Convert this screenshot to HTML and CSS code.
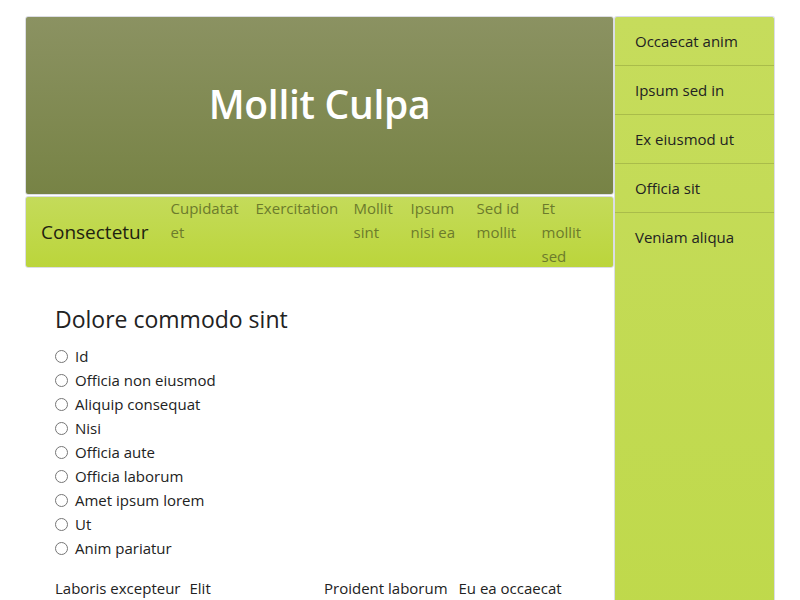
FILE: index.html
```html
<!DOCTYPE html>
<html>
<head>
<meta charset="utf-8">
<link rel="stylesheet" href="styles.css">
</head>
<body>
<div class="page">
  <div class="main">
    <header class="hero"><h1>Mollit Culpa</h1></header>
    <nav class="nav">
      <span class="brand">Consectetur</span>
      <a class="link l1">Cupidatat<br>et</a>
      <a class="link l2">Exercitation</a>
      <a class="link l3">Mollit<br>sint</a>
      <a class="link l4">Ipsum<br>nisi ea</a>
      <a class="link l5">Sed id<br>mollit</a>
      <a class="link l6">Et<br>mollit<br>sed</a>
    </nav>
    <section class="content">
      <h2>Dolore commodo sint</h2>
      <ul class="radios">
        <li><label><input type="radio" name="r">Id</label></li>
        <li><label><input type="radio" name="r">Officia non eiusmod</label></li>
        <li><label><input type="radio" name="r">Aliquip consequat</label></li>
        <li><label><input type="radio" name="r">Nisi</label></li>
        <li><label><input type="radio" name="r">Officia aute</label></li>
        <li><label><input type="radio" name="r">Officia laborum</label></li>
        <li><label><input type="radio" name="r">Amet ipsum lorem</label></li>
        <li><label><input type="radio" name="r">Ut</label></li>
        <li><label><input type="radio" name="r">Anim pariatur</label></li>
      </ul>
      <div class="row">
        <span>Laboris excepteur</span>
        <span>Elit</span>
        <span>Proident laborum</span>
        <span>Eu ea occaecat</span>
      </div>
    </section>
  </div>
  <aside class="side">
    <a class="item">Occaecat anim</a>
    <a class="item">Ipsum sed in</a>
    <a class="item">Ex eiusmod ut</a>
    <a class="item">Officia sit</a>
    <a class="item">Veniam aliqua</a>
  </aside>
</div>
</body>
</html>
```
FILE: styles.css
```css
html, body {
  margin: 0;
  padding: 0;
  background: #fff;
  font-family: "Open Sans", "Noto Sans", sans-serif;
  color: #222;
  overflow: hidden;
}
.page {
  display: flex;
  align-items: flex-start;
  padding: 16px 0 0 24px;
  height: 584px;
}
.main {
  flex: 0 0 590px;
  width: 590px;
  min-width: 0;
  box-sizing: border-box;
  padding-left: 1px;
  display: flex;
  flex-direction: column;
  gap: 1px;
}
.hero {
  height: 179px;
  box-sizing: border-box;
  border: 1px solid #dcdde3;
  border-radius: 3px;
  background: linear-gradient(#8b9262, #778345);
  display: flex;
  align-items: center;
  justify-content: center;
  padding-bottom: 5px;
}
.hero h1 {
  margin: 0;
  color: #fff;
  font-size: 39px;
  font-weight: 600;
  letter-spacing: -0.3px;
}
.nav {
  display: flex;
  align-items: flex-start;
  box-sizing: border-box;
  border: 1px solid #dcdde3;
  border-radius: 3px;
  background: linear-gradient(#c4db5a, #bbd53b);
  padding: 0 0 0 15px;
  height: 72px;
}
.brand {
  font-size: 19px;
  line-height: 70px;
  margin-right: 14px;
  color: #1e2210;
  white-space: nowrap;
}
.link {
  flex: none;
  box-sizing: border-box;
  padding: 0 8px;
  margin-top: -1px;
  font-size: 15px;
  line-height: 24px;
  color: #6c7b2c;
  white-space: nowrap;
}
.l1 { width: 85px; }
.l2 { width: 98px; }
.l3 { width: 57px; }
.l4 { width: 66px; }
.l5 { width: 65px; }
.l6 { width: 57px; }
.content {
  padding: 36px 30px 0 30px;
}
.content h2 {
  margin: 0 0 10px;
  font-size: 23px;
  font-weight: 400;
  line-height: 29px;
}
.radios {
  list-style: none;
  margin: 0;
  padding: 0;
}
.radios li {
  font-size: 15px;
  line-height: 24px;
}
.radios label {
  display: flex;
  align-items: center;
}
.radios input {
  margin: 0 7px 0 0;
  width: 13px;
  height: 13px;
}
.row {
  margin-top: 16px;
  display: grid;
  grid-template-columns: repeat(4, 134.5px);
  font-size: 15px;
  line-height: 24px;
}
.side {
  flex: 0 0 161px;
  box-sizing: border-box;
  height: 600px;
  border: 1px solid #dadce8;
  border-bottom: none;
  border-radius: 3px 3px 0 0;
  background: linear-gradient(#c6dc5c, #bfd94b);
  display: flex;
  flex-direction: column;
}
.item {
  height: 49px;
  box-sizing: border-box;
  border-bottom: 1px solid #a9bc4a;
  padding: 0 19px 0 20px;
  font-size: 15px;
  line-height: 48px;
  color: #222;
}
.item:last-child {
  border-bottom: none;
}
```
